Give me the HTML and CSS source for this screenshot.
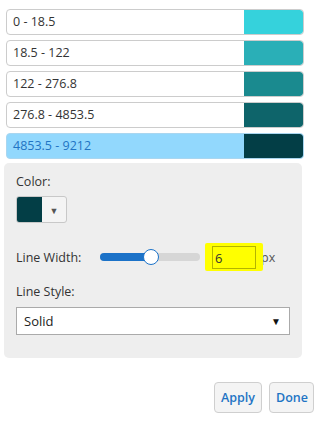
FILE: index.html
```html
<!DOCTYPE html>
<html>
<head>
<meta charset="utf-8">
<link rel="stylesheet" href="styles.css">
</head>
<body>
<div class="ranges">
  <div class="row"><span class="label">0 - 18.5</span><span class="sw" style="background:#35d2dc"></span></div>
  <div class="row"><span class="label">18.5 - 122</span><span class="sw" style="background:#2aafb7"></span></div>
  <div class="row"><span class="label">122 - 276.8</span><span class="sw" style="background:#1a8a8f"></span></div>
  <div class="row"><span class="label">276.8 - 4853.5</span><span class="sw" style="background:#0e646a"></span></div>
  <div class="row selected"><span class="label">4853.5 - 9212</span><span class="sw" style="background:#033e46"></span></div>
</div>
<div class="panel">
  <div class="field-label">Color:</div>
  <div class="picker"><span class="picker-sw"></span><span class="picker-btn">▼</span></div>
  <div class="lw">
    <span class="lw-label">Line Width:</span>
    <div class="slider"><div class="fill"></div><div class="thumb"></div></div>
    <div class="num-wrap"><span class="hl"></span><span class="num">6</span></div>
    <span class="px">px</span>
  </div>
  <div class="field-label ls">Line Style:</div>
  <div class="select"><span>Solid</span><span class="arrow">▼</span></div>
</div>
<div class="buttons">
  <button class="btn">Apply</button>
  <button class="btn">Done</button>
</div>
</body>
</html>
```
FILE: styles.css
```css
html, body { margin: 0; padding: 0; background: #fff; }
body { font-family: "Open Sans", "Noto Sans", sans-serif; font-size: 12.5px; color: #333; width: 321px; height: 423px; overflow: hidden; }
.ranges { padding: 9px 0 0 6px; display: flex; flex-direction: column; gap: 5px; width: 298px; }
.row { height: 24px; border: 1px solid #cccccc; border-radius: 4px; display: flex; align-items: stretch; background: #fff; overflow: hidden; }
.row .label { flex: 1; padding-left: 6px; line-height: 24px; }
.row .sw { width: 59px; border-radius: 0 3px 3px 0; }
.row.selected { background: #92d8fd; border-color: #a9d6f0; color: #1f74c4; }
.panel { margin: 4px 0 0 4px; width: 298px; height: 195px; background: #eeeeee; border-radius: 5px; box-sizing: border-box; padding: 10px 12px 0 12px; }
.field-label { line-height: 18px; }
.picker { margin-top: 5px; width: 49px; height: 25px; border: 1px solid #c8c8c8; border-radius: 3px; display: flex; overflow: hidden; background: #f4f4f4; }
.picker-sw { width: 25px; background: #033e46; }
.picker-btn { flex: 1; font-size: 9px; color: #555; display: flex; align-items: center; justify-content: center; padding-top: 2px; }
.lw { display: flex; align-items: center; margin-top: 22px; height: 24px; }
.lw-label { width: 84px; }
.slider { position: relative; width: 100px; height: 8px; border-radius: 4px; background: #d6d6d6; }
.fill { width: 52px; height: 8px; border-radius: 4px; background: #1b72c8; }
.thumb { position: absolute; left: 43px; top: -4px; width: 14px; height: 14px; border-radius: 50%; background: #fff; border: 1px solid #1b72c8; }
.num-wrap { position: relative; margin-left: 12px; width: 44px; height: 23px; }
.hl { position: absolute; left: -7px; top: -3px; width: 58px; height: 28px; background: #ffff00; border-radius: 2px; }
.num { position: absolute; inset: 0; box-sizing: border-box; border: 1px solid #b4b400; background: #ffff00; padding-left: 2px; line-height: 22px; font-size: 13px; color: #333; }
.px { margin-left: 5px; color: #555; }
.ls { margin-top: 14px; }
.select { margin-top: 6px; width: 274px; height: 28px; box-sizing: border-box; border: 1px solid #aaa; background: #fff; display: flex; align-items: center; justify-content: space-between; padding: 0 8px 0 7px; color: #222; font-size: 13px; }
.arrow { font-size: 10px; color: #111; }
.buttons { display: flex; justify-content: flex-end; gap: 7px; padding: 24px 7px 0 0; }
.btn { font-family: "Open Sans", "Noto Sans", sans-serif; font-size: 12.5px; font-weight: 600; color: #1f74c4; background: #f4f4f4; border: 1px solid #cfcfcf; border-radius: 4px; height: 31px; padding: 0 6px; }
.btn:first-child { width: 48px; }
.btn:last-child { width: 45px; }
```
